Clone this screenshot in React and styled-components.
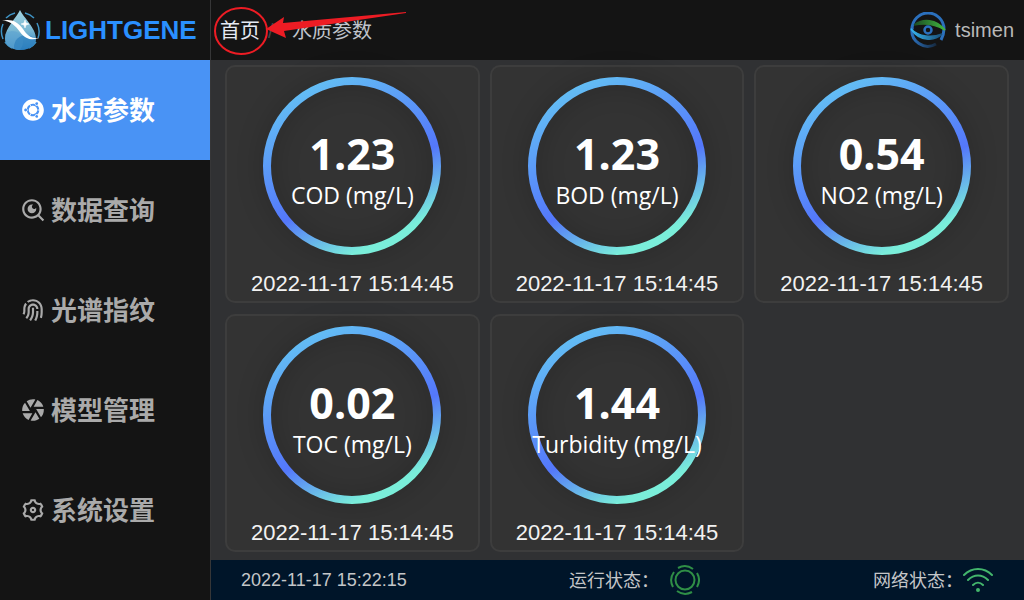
import React from "react";
import styled, { createGlobalStyle } from "styled-components";
import {
  RiSearchEyeLine,
  RiFingerprintLine,
  RiCameraLensFill,
  RiSettings3Line,
  RiUbuntuFill,
} from "react-icons/ri";

const sans = `"Liberation Sans", "Noto Sans CJK SC", sans-serif`;

const GlobalStyle = createGlobalStyle`
  *, *::before, *::after { box-sizing: border-box; }
  body { margin: 0; background: #303133; font-family: ${sans}; }
  h1, ul, ol, p { margin: 0; padding: 0; list-style: none; }
`;

const Shell = styled.div`
  display: grid;
  grid-template-columns: 210px 1fr;
  min-height: 100vh;
`;

const Sidebar = styled.aside`
  background: #141414;
`;

const Brand = styled.h1`
  display: flex;
  align-items: center;
  gap: 4px;
  height: 60px;
  color: #2a90ff;
  font-size: 26px;
  line-height: 30px;
`;

const MenuLink = styled.a`
  display: flex;
  align-items: center;
  gap: 5px;
  height: 100px;
  padding-left: 20px;
  font-size: 26px;
  font-weight: 700;
  text-decoration: none;
  color: ${(p) => (p.$active ? "#ffffff" : "#aaaaaa")};
  background: ${(p) => (p.$active ? "#4993f5" : "transparent")};

  svg {
    width: 26px;
    height: 26px;
  }
`;

const MenuLabel = styled.span`
  padding-bottom: 4px;
`;

const Content = styled.div`
  display: grid;
  grid-template-rows: 60px 1fr 40px;
  border-left: 1px solid #363637;
`;

const Header = styled.header`
  display: flex;
  align-items: center;
  justify-content: space-between;
  padding: 0 10px 0 9px;
  background: #141414;
`;

const Crumbs = styled.ol`
  position: relative;
  display: flex;
  align-items: center;
  padding-top: 2px;
  font-size: 20px;
  line-height: 30px;
`;

const Crumb = styled.li`
  color: #c0c4cc;

  & + &::before {
    content: "/";
    display: inline-block;
    width: 32px;
    padding-left: 8px;
    color: #45474b;
  }

  a {
    color: #e5eaf3;
    text-decoration: none;
  }
`;

const Marker = styled.svg`
  position: absolute;
  top: -14px;
  left: -10px;
  width: 200px;
  height: 60px;
  pointer-events: none;
`;

const User = styled.div`
  display: flex;
  align-items: center;
  gap: 9px;
  color: #b9b9b9;
  font-size: 20px;
`;

const Cards = styled.main`
  display: grid;
  grid-template-columns: repeat(3, 1fr);
  align-content: start;
  gap: 11px 10px;
  padding: 5px 15px 8px 14px;
  background: #303133;
`;

const Card = styled.article`
  display: flex;
  flex-direction: column;
  align-items: center;
  gap: 14px;
  padding: 10px 0 3px;
  border: 2px solid #3d3d3d;
  border-radius: 10px;
  background: #333333;
`;

const Gauge = styled.div`
  display: grid;
  grid-template: 178px / 178px;
  place-items: center;

  > * {
    grid-area: 1 / 1;
  }
`;

const Ring = styled.svg`
  width: 178px;
  height: 178px;
  overflow: visible;
  filter: drop-shadow(0 0 12px rgba(0, 0, 0, 0.3));
`;

const Reading = styled.div`
  z-index: 1;
  display: flex;
  flex-direction: column;
  align-items: center;
  padding-top: 14px;
  color: #ffffff;
  font-family: "Open Sans", "Noto Sans", sans-serif;
  white-space: nowrap;
`;

const Value = styled.strong`
  font-size: 43px;
  line-height: 44px;
`;

const Unit = styled.span`
  font-size: 23px;
  line-height: 38px;
`;

const Stamp = styled.time`
  color: #f2f2f2;
  font-size: 22px;
  line-height: 29px;
`;

const Footer = styled.footer`
  display: flex;
  align-items: center;
  justify-content: space-between;
  padding: 0 31px 0 30px;
  background: #001529;
  color: #c4c6c8;
  font-size: 18px;
`;

const Status = styled.span`
  display: flex;
  align-items: center;
  gap: ${(p) => p.$gap}px;
  padding-right: ${(p) => p.$gap}px;
`;

const StatusLabel = styled.span`
  padding-bottom: 2px;
`;

function DropLogo() {
  return (
    <svg width="41" height="42" viewBox="0 0 41 42" aria-hidden="true">
      <defs>
        <linearGradient id="drop" x1="0" y1="0" x2="0" y2="1">
          <stop offset="0" stopColor="#a3d5e2" />
          <stop offset="0.5" stopColor="#7ab8d3" />
          <stop offset="1" stopColor="#2379bd" />
        </linearGradient>
        <clipPath id="dropClip">
          <path d="M20 1C23 8 36 19 36 29.500C36 36 30 41 20.500 41C11 41 5 36 5 29.500C5 19 17 8 20 1Z" />
        </clipPath>
      </defs>
      <g fill="none" stroke="#3f93c4" strokeWidth="1.500">
        <path d="M6 9A19 19 0 0 1 15 4M25 4A19 19 0 0 1 34 9" />
        <path d="M3 15A19 19 0 0 0 3 30M37 14A19 19 0 0 1 38 29" />
        <path d="M5 33A19 19 0 0 0 12 39M36 33A19 19 0 0 1 29 39" />
      </g>
      <g clipPath="url(#dropClip)">
        <rect width="41" height="42" fill="url(#drop)" />
        <circle cx="12" cy="33" r="11" fill="#5fa5d1" opacity="0.7" />
        <circle cx="26" cy="38" r="12" fill="#2d80bf" opacity="0.7" />
      </g>
      <path d="M2 11.500C12 9.500 18 13 23 20C27 26 31 30 39 29C32 32 25 30 20 23C15 16 10 12 2 11.500Z" fill="#ffffff" />
      <path d="M25 11L26 14L29 15L26 16L25 19L24 16L21 15L24 14Z" fill="#ffffff" stroke="#ffffff" strokeWidth="0.500" />
    </svg>
  );
}

function EyeLogo() {
  return (
    <svg width="36" height="36" viewBox="0 0 36 36" fill="none" aria-hidden="true">
      <defs>
        <linearGradient id="lid" x1="0" y1="0" x2="1" y2="0">
          <stop offset="0" stopColor="#1b4a25" />
          <stop offset="1" stopColor="#42b83f" />
        </linearGradient>
        <linearGradient id="under" x1="0" y1="0" x2="1" y2="0">
          <stop offset="0" stopColor="#37b4ef" />
          <stop offset="1" stopColor="#1a5078" />
        </linearGradient>
        <linearGradient id="fade" x1="0" y1="0" x2="1" y2="0">
          <stop offset="0" stopColor="#2b70bd" />
          <stop offset="1" stopColor="#162a40" />
        </linearGradient>
      </defs>
      <path d="M2 17A16 16 0 0 1 34 17C34 22 33 24 31 28" stroke="#2b70bd" strokeWidth="3" />
      <path d="M2 16A16 16 0 0 0 26 32" stroke="url(#fade)" strokeWidth="3" />
      <path d="M4 13C13 6 26 7 35 18C25 12 14 11 4 13Z" fill="url(#lid)" stroke="url(#lid)" strokeWidth="1.500" />
      <path d="M1 17C9 29 24 30 32 22C22 26 9 25 1 17Z" fill="url(#under)" stroke="url(#under)" strokeWidth="1.500" />
      <circle cx="18" cy="18" r="3.500" stroke="#2b70bd" strokeWidth="2.500" />
    </svg>
  );
}

function RunIcon() {
  return (
    <svg width="30" height="30" viewBox="0 0 30 30" fill="none" stroke="#2f8f46" strokeWidth="2" aria-hidden="true">
      <circle cx="15" cy="15" r="9.500" />
      <path d="M8 3A14 14 0 0 1 23 4M27 8A14 14 0 0 1 27 22M22 27A14 14 0 0 1 7 26M3 22A14 14 0 0 1 4 7" />
    </svg>
  );
}

function WifiIcon() {
  return (
    <svg width="30" height="26" viewBox="0 0 30 26" fill="none" stroke="#43b66c" strokeWidth="2" strokeLinecap="round" aria-hidden="true">
      <path d="M1 8C9 0 21 0 29 8M5 13C11 7 19 7 25 13M10 18C13 15 17 15 20 18" />
      <circle cx="15" cy="23" r="1" fill="#43b66c" />
    </svg>
  );
}

const menu = [
  { label: "水质参数", Icon: RiUbuntuFill, active: true },
  { label: "数据查询", Icon: RiSearchEyeLine },
  { label: "光谱指纹", Icon: RiFingerprintLine },
  { label: "模型管理", Icon: RiCameraLensFill },
  { label: "系统设置", Icon: RiSettings3Line },
];

const readings = [
  { name: "COD", value: "1.23" },
  { name: "BOD", value: "1.23" },
  { name: "NO2", value: "0.54" },
  { name: "TOC", value: "0.02" },
  { name: "Turbidity", value: "1.44" },
];

function ReadingCard({ name, value }) {
  const gradient = `ring-${name}`;
  return (
    <Card>
      <Gauge>
        <Ring viewBox="0 0 178 178" aria-hidden="true">
          <defs>
            <linearGradient id={gradient} gradientUnits="userSpaceOnUse" x1="0" y1="0" x2="89" y2="178">
              <stop offset="0" stopColor="#67d0f2" />
              <stop offset="0.7" stopColor="#5477fb" />
              <stop offset="1" stopColor="#7aeeda" />
            </linearGradient>
          </defs>
          <circle cx="89" cy="89" r="85" fill="none" stroke={`url(#${gradient})`} strokeWidth="8" />
        </Ring>
        <Reading>
          <Value>{value}</Value>
          <Unit>{name} (mg/L)</Unit>
        </Reading>
      </Gauge>
      <Stamp>2022-11-17 15:14:45</Stamp>
    </Card>
  );
}

export default function App() {
  return (
    <>
      <GlobalStyle />
      <Shell>
        <Sidebar>
          <Brand>
            <DropLogo />
            LIGHTGENE
          </Brand>
          <nav>
            <ul>
              {menu.map(({ label, Icon, active }) => (
                <li key={label}>
                  <MenuLink href="#" $active={active} aria-current={active ? "page" : undefined}>
                    <Icon aria-hidden="true" />
                    <MenuLabel>{label}</MenuLabel>
                  </MenuLink>
                </li>
              ))}
            </ul>
          </nav>
        </Sidebar>
        <Content>
          <Header>
            <Crumbs>
              <Crumb>
                <a href="#">首页</a>
              </Crumb>
              <Crumb>水质参数</Crumb>
              <Marker viewBox="0 0 200 60" aria-hidden="true">
                <ellipse cx="31" cy="31" rx="26" ry="23" fill="none" stroke="#ed1c24" strokeWidth="2" />
                <path d="M56 29L74 17L73 23L196 12L196 13L74 31L76 38Z" fill="#ed1c24" />
              </Marker>
            </Crumbs>
            <User>
              <EyeLogo />
              tsimen
            </User>
          </Header>
          <Cards>
            {readings.map((r) => (
              <ReadingCard key={r.name} {...r} />
            ))}
          </Cards>
          <Footer>
            <time>2022-11-17 15:22:15</time>
            <Status $gap={11}>
              <StatusLabel>运行状态：</StatusLabel>
              <RunIcon />
            </Status>
            <Status $gap={0}>
              <StatusLabel>网络状态：</StatusLabel>
              <WifiIcon />
            </Status>
          </Footer>
        </Content>
      </Shell>
    </>
  );
}
